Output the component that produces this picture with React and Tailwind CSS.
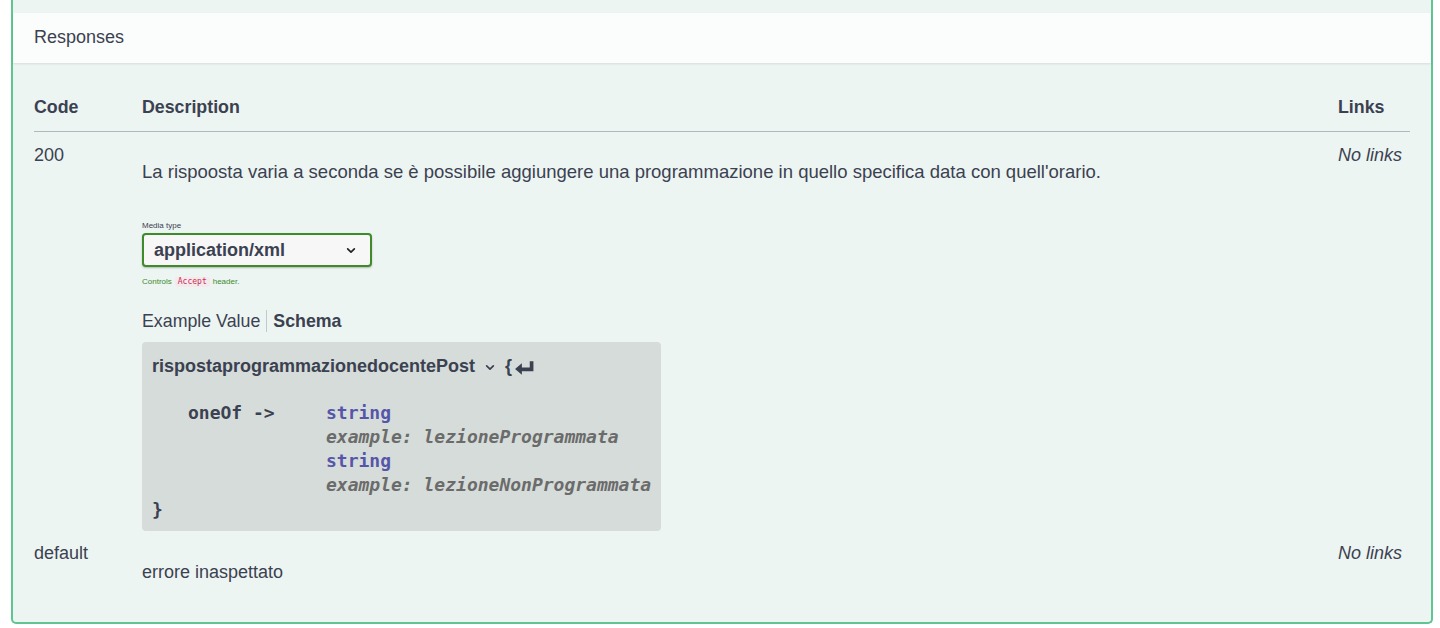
import React from 'react';

const sans = { fontFamily: '"Liberation Sans", Arial, sans-serif' };
const mono = { fontFamily: '"DejaVu Sans Mono", monospace' };

function Chevron({ className = '' }) {
  return (
    <svg viewBox="0 0 12 8" className={className} fill="none" stroke="currentColor" strokeWidth="2" strokeLinecap="round" strokeLinejoin="round">
      <path d="M2 2l4 4 4-4" />
    </svg>
  );
}

function ReturnArrow() {
  return (
    <svg viewBox="0 0 20 14" className="w-[21px] h-[15px] ml-[2px] mt-[2px]" fill="#3b4151">
      <path d="M15 1h3.5v9.5H7.5V14L1 8.5 7.5 3v4H15z" />
    </svg>
  );
}

function SchemaBox() {
  return (
    <div className="mt-[10px] w-[519px] h-[189px] rounded-[4px] bg-[#d5dcd9] pl-[10px] pt-[12px] text-[#3b4151]">
      <div className="flex items-center h-[24px]" style={sans}>
        <span className="text-[18px] font-bold">rispostaprogrammazionedocentePost</span>
        <Chevron className="w-[10px] h-[7px] ml-[10px] mt-[2px] text-[#3b4151]" />
        <span className="ml-[10px] text-[18px] font-bold">{'{'}</span>
        <ReturnArrow />
      </div>
      <div className="mt-[23px] flex text-[18px] leading-[24px]" style={mono}>
        <div className="w-[174px] pl-[36px] font-bold">oneOf -&gt;</div>
        <div>
          <div className="font-bold text-[#55a]">string</div>
          <div className="italic font-bold text-[#6b6b6b]">example: lezioneProgrammata</div>
          <div className="font-bold text-[#55a]">string</div>
          <div className="italic font-bold text-[#6b6b6b]">example: lezioneNonProgrammata</div>
        </div>
      </div>
      <div className="mt-[1px] text-[18px] leading-[24px] font-bold" style={mono}>{'}'}</div>
    </div>
  );
}

export default function App() {
  return (
    <div className="bg-white h-[628px] pl-[11px] text-[#3b4151]" style={sans}>
      <div className="w-[1422px] h-[624px] bg-[#edf5f2] border-2 border-t-0 border-[#5ec593] rounded-b-[5px] pt-[13px]">
        {/* Header */}
        <div className="h-[50px] bg-[#fbfdfc] shadow-[0_1px_2px_rgba(0,0,0,0.1)] flex items-center pl-[21px]">
          <h4 className="text-[18px] leading-[22px] -mt-[2px]">Responses</h4>
        </div>

        {/* Table */}
        <div className="px-[21px] mt-[21px]">
          <div className="flex items-center h-[48px] border-b border-[#b3b8bd] font-bold text-[17.8px]">
            <div className="w-[108px]">Code</div>
            <div className="flex-1">Description</div>
            <div className="w-[72px]">Links</div>
          </div>

          {/* 200 */}
          <div className="flex pt-[12px] text-[18px] leading-[22px]">
            <div className="w-[108px]">200</div>
            <div className="flex-1">
              <p className="mt-[17px] text-[18.5px]">
                La rispoosta varia a seconda se è possibile aggiungere una programmazione in quello specifica data con quell'orario.
              </p>
              <div className="mt-[38px] text-[8px] leading-[10px]">Media type</div>
              <div className="mt-[2px] w-[230px] h-[34px] rounded-[4px] border-2 border-[#3f8a2a] bg-[#f7f7f7] shadow-[0_1px_2px_rgba(0,0,0,0.25)] flex items-center justify-between pl-[10px] pr-[14px]">
                <span className="font-bold text-[18px]">application/xml</span>
                <Chevron className="w-[10px] h-[7px] text-[#222]" />
              </div>
              <div className="mt-[10px] text-[8px] leading-[10px] text-[#3c8a2e] flex items-center">
                <span>Controls</span>
                <span className="mx-[3px] px-[3px] rounded-[2px] bg-[#f6e9ec] text-[#c72d55]" style={mono}>Accept</span>
                <span>header.</span>
              </div>
              <div className="mt-[23px] flex items-center h-[22px] text-[17.8px]">
                <span>Example Value</span>
                <span className="mx-[6px] w-px h-[22px] bg-[#c4c8cc]"></span>
                <span className="font-bold">Schema</span>
              </div>
              <SchemaBox />
            </div>
            <div className="w-[72px] italic">No links</div>
          </div>

          {/* default */}
          <div className="flex pt-[11px] text-[18px] leading-[22px]">
            <div className="w-[108px]">default</div>
            <div className="flex-1">
              <p className="mt-[19px]">errore inaspettato</p>
            </div>
            <div className="w-[72px] italic">No links</div>
          </div>
        </div>
      </div>
    </div>
  );
}
